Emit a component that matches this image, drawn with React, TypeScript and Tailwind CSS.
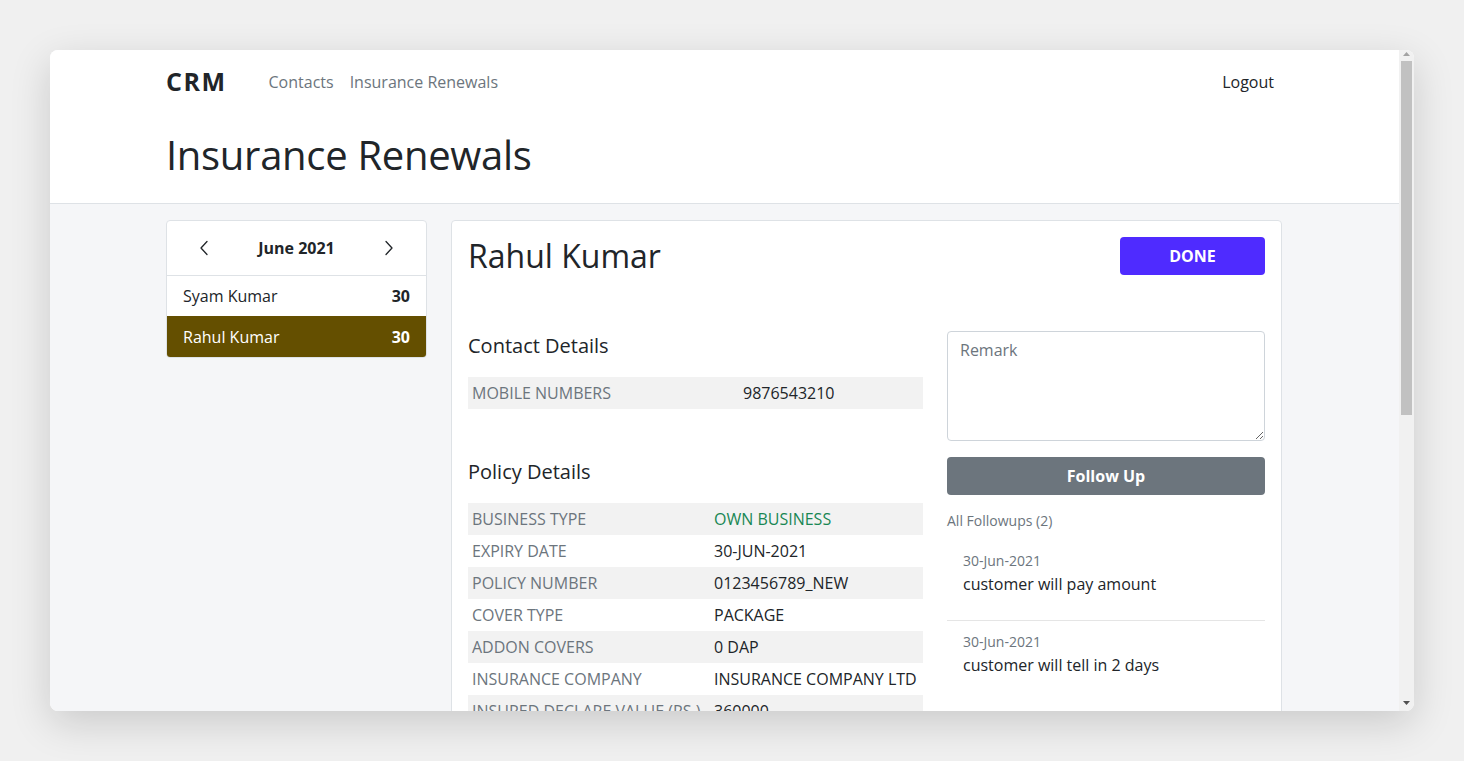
import React from "react";

const policy: [string, string, boolean?][] = [
  ["BUSINESS TYPE", "OWN BUSINESS", true],
  ["EXPIRY DATE", "30-JUN-2021"],
  ["POLICY NUMBER", "0123456789_NEW"],
  ["COVER TYPE", "PACKAGE"],
  ["ADDON COVERS", "0 DAP"],
  ["INSURANCE COMPANY", "INSURANCE COMPANY LTD"],
  ["INSURED DECLARE VALUE (RS.)", "360000"],
];

const followups = [
  { date: "30-Jun-2021", text: "customer will pay amount" },
  { date: "30-Jun-2021", text: "customer will tell in 2 days" },
];

function Chevron({ dir }: { dir: "left" | "right" }) {
  return (
    <svg width="10" height="16" viewBox="0 0 10 16" fill="none" stroke="#212529" strokeWidth="1.3" strokeLinecap="round" strokeLinejoin="round">
      {dir === "left" ? <path d="M8 1.5 L2 8 L8 14.5" /> : <path d="M2 1.5 L8 8 L2 14.5" />}
    </svg>
  );
}

function DetailTable({ rows, keyWidth }: { rows: [string, string, boolean?][]; keyWidth: string }) {
  return (
    <div className="flex flex-col">
      {rows.map(([k, v, green], i) => (
        <div key={k} className={`flex h-[32px] items-center ${i % 2 === 0 ? "bg-[#f2f2f2]" : ""}`}>
          <div className={`${keyWidth} shrink-0 px-[4px] text-[#6c757d]`}>{k}</div>
          <div className={`px-[4px] ${green ? "text-[#198754]" : "text-[#212529]"}`}>{v}</div>
        </div>
      ))}
    </div>
  );
}

// classic scrollbar, drawn since the headless page hides native ones
function Scrollbar() {
  return (
    <div className="flex w-[15px] shrink-0 flex-col bg-[#f1f1f1]">
      <div className="flex h-[11px] justify-center pt-[2px]">
        <svg width="7" height="4" viewBox="0 0 7 4"><path d="M3.5 0 L7 4 L0 4 Z" fill="#a3a3a3" /></svg>
      </div>
      <div className="mx-[2px] h-[354px] bg-[#c1c1c1]" />
      <div className="flex-1" />
      <div className="flex h-[14px] justify-center pt-[4px]">
        <svg width="7" height="4" viewBox="0 0 7 4"><path d="M0 0 L7 0 L3.5 4 Z" fill="#505050" /></svg>
      </div>
    </div>
  );
}

export default function App() {
  return (
    <div className="h-[761px] w-full bg-[#f0f0f0] p-[50px] font-['Open_Sans',sans-serif] text-[16px] text-[#212529]">
      <div className="flex h-[661px] overflow-hidden rounded-[8px] bg-white shadow-[0_12px_40px_rgba(0,0,0,0.16)]">
        <div className="h-full flex-1 overflow-hidden bg-[#f5f6f8]">
          <header className="border-b border-[#dee2e6] bg-white">
            <div className="ml-[116px] w-[1116px]">
              <nav className="flex h-[64px] items-center">
                <span className="mr-[42px] text-[25px] font-bold tracking-[1.5px]">CRM</span>
                <span className="mr-[16px] text-[#6c757d]">Contacts</span>
                <span className="text-[#6c757d]">Insurance Renewals</span>
                <span className="ml-auto mr-[8px]">Logout</span>
              </nav>
              <h1 className="pb-[24px] pt-[17px] text-[40px] leading-[48px] tracking-[-0.3px]">Insurance Renewals</h1>
            </div>
          </header>

          <main className="ml-[116px] flex w-[1116px] gap-[24px] pt-[16px]">
            <aside className="h-fit w-[261px] shrink-0 overflow-hidden rounded-[4px] border border-[#dee2e6] bg-white">
              <div className="flex h-[55px] items-center justify-between border-b border-[#dee2e6] px-[32px]">
                <Chevron dir="left" />
                <span className="font-bold">June 2021</span>
                <Chevron dir="right" />
              </div>
              <div className="flex h-[40px] items-center justify-between px-[16px]">
                <span>Syam Kumar</span>
                <span className="font-bold">30</span>
              </div>
              <div className="flex h-[41px] items-center justify-between bg-[#644f00] px-[16px] text-white">
                <span>Rahul Kumar</span>
                <span className="font-bold">30</span>
              </div>
            </aside>

            <section className="flex-1 rounded-[4px] border border-[#dee2e6] bg-white p-[16px]">
              <div className="flex items-start justify-between">
                <h2 className="text-[32px] font-medium leading-[38px]">Rahul Kumar</h2>
                <button className="h-[38px] w-[145px] rounded-[4px] bg-[#4f2bff] font-bold text-white">DONE</button>
              </div>

              <div className="mt-[56px] flex gap-[24px]">
                <div className="w-[455px] shrink-0">
                  <h5 className="mb-[16px] text-[20px] leading-[30px]">Contact Details</h5>
                  <DetailTable rows={[["MOBILE NUMBERS", "9876543210"]]} keyWidth="w-[271px]" />
                  <h5 className="mb-[16px] mt-[48px] text-[20px] leading-[30px]">Policy Details</h5>
                  <DetailTable rows={policy} keyWidth="w-[242px]" />
                </div>

                <div className="flex-1">
                  <textarea
                    placeholder="Remark"
                    className="block h-[110px] w-full resize-y rounded-[4px] border border-[#ced4da] px-[12px] py-[6px] placeholder:text-[#6c757d]"
                  />
                  <button className="mt-[16px] h-[38px] w-full rounded-[4px] bg-[#6c757d] font-bold text-white">Follow Up</button>
                  <div className="mt-[16px] text-[14px] leading-[20px] text-[#6c757d]">All Followups (2)</div>
                  <div className="mt-[8px]">
                    {followups.map((f, i) => (
                      <div key={i} className={`px-[16px] pb-[24px] ${i > 0 ? "border-t border-[#e5e5e5] pt-[11px]" : "pt-[12px]"}`}>
                        <div className="text-[14px] leading-[20px] text-[#6c757d]">{f.date}</div>
                        <div className="mt-[1px] leading-[24px]">{f.text}</div>
                      </div>
                    ))}
                  </div>
                </div>
              </div>
            </section>
          </main>
        </div>
        <Scrollbar />
      </div>
    </div>
  );
}
